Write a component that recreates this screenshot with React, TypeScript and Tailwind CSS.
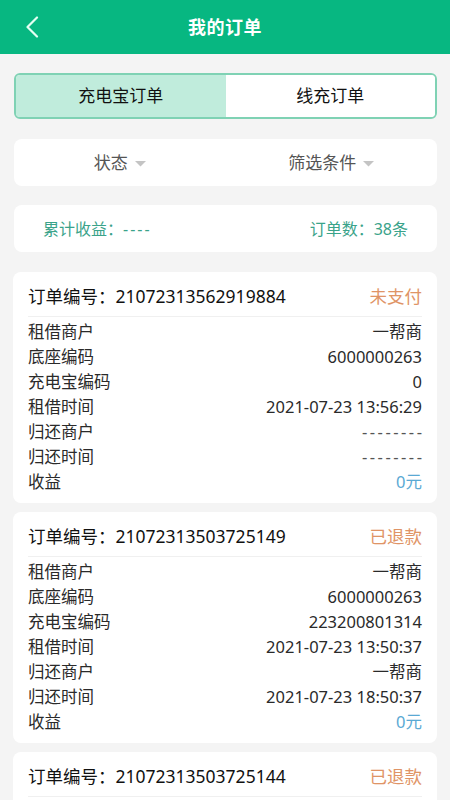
import { ReactNode } from 'react'

type Order = {
  no: string
  status: string
  rows: [string, string][]
  income: string
}

const orders: Order[] = [
  {
    no: '21072313562919884',
    status: '未支付',
    rows: [
      ['租借商户', '一帮商'],
      ['底座编码', '6000000263'],
      ['充电宝编码', '0'],
      ['租借时间', '2021-07-23 13:56:29'],
      ['归还商户', '--------'],
      ['归还时间', '--------'],
    ],
    income: '0元',
  },
  {
    no: '21072313503725149',
    status: '已退款',
    rows: [
      ['租借商户', '一帮商'],
      ['底座编码', '6000000263'],
      ['充电宝编码', '223200801314'],
      ['租借时间', '2021-07-23 13:50:37'],
      ['归还商户', '一帮商'],
      ['归还时间', '2021-07-23 18:50:37'],
    ],
    income: '0元',
  },
  {
    no: '21072313503725144',
    status: '已退款',
    rows: [
      ['租借商户', '一帮商'],
      ['底座编码', '6000000263'],
      ['充电宝编码', '223200801314'],
      ['租借时间', '2021-07-23 13:50:37'],
      ['归还商户', '一帮商'],
      ['归还时间', '2021-07-23 18:50:37'],
    ],
    income: '0元',
  },
]

function Caret() {
  return (
    <svg width="11" height="6" viewBox="0 0 11 6" className="ml-[7px] mt-[2px]">
      <polygon points="0,0 11,0 5.5,5.5" fill="#c4c4c4" />
    </svg>
  )
}

function Row({ label, children }: { label: string; children: ReactNode }) {
  return (
    <div className="flex items-center justify-between h-[25px] text-[16.5px] text-[#2a2a2a]">
      <span>{label}</span>
      {children}
    </div>
  )
}

export default function App() {
  return (
    <div
      className="min-h-screen bg-[#f4f4f4] pb-4"
      style={{ fontFamily: '"Noto Sans", "Noto Sans CJK SC", sans-serif' }}
    >
      {/* Header */}
      <div className="relative h-[54px] bg-[#07b781] flex items-center justify-center">
        <svg width="14" height="22" viewBox="0 0 14 22" className="absolute left-[25px] top-[16px]">
          <polyline points="12,1.5 2.5,11 12,20.5" fill="none" stroke="#e4fff3" strokeWidth="2.2" strokeLinecap="round" strokeLinejoin="round" />
        </svg>
        <h1 className="text-white text-[18px] font-bold tracking-[0.5px]">我的订单</h1>
      </div>

      <div className="px-[13px]">
        {/* Tabs */}
        <div className="mt-[19px] ml-[1px] h-[46px] flex rounded-[6px] border-2 border-[#7fd2b4] overflow-hidden text-[17px] text-[#111]">
          <div className="flex-1 flex items-center justify-center bg-[#c0ecdc]">充电宝订单</div>
          <div className="flex-1 flex items-center justify-center bg-white">线充订单</div>
        </div>

        {/* Filters */}
        <div className="mt-[20px] ml-[1px] h-[47px] flex rounded-[8px] bg-white text-[17px] text-[#555]">
          <div className="flex-1 flex items-center justify-center">
            状态
            <Caret />
          </div>
          <div className="flex-1 flex items-center justify-center">
            筛选条件
            <Caret />
          </div>
        </div>

        {/* Stats */}
        <div className="mt-[19px] ml-[1px] h-[47px] flex items-center justify-between px-[29px] rounded-[8px] bg-white text-[16px] text-[#3aa38a]">
          <span>
            累计收益：<span className="tracking-[2px]">----</span>
          </span>
          <span>订单数：38条</span>
        </div>

        {/* Orders */}
        <div className="mt-[20px] flex flex-col gap-[9px]">
          {orders.map((o) => (
            <div key={o.no} className="rounded-[8px] bg-white px-[15px] pb-[8px]">
              <div className="flex items-center justify-between pt-[12px] pb-[8px] leading-[24px] border-b border-[#f0f0f0] text-[17.5px]">
                <span className="text-[#111]">订单编号：{o.no}</span>
                <span className="text-[#df9466]">{o.status}</span>
              </div>
              <div className="pt-[3px]">
                {o.rows.map(([k, v]) => (
                  <Row key={k} label={k}>
                    <span className={v.startsWith('-') ? 'text-[#555] tracking-[2.5px] -mr-[2.5px]' : ''}>{v}</span>
                  </Row>
                ))}
                <Row label="收益">
                  <span className="text-[#5aa9d4]">{o.income}</span>
                </Row>
              </div>
            </div>
          ))}
        </div>
      </div>
    </div>
  )
}
